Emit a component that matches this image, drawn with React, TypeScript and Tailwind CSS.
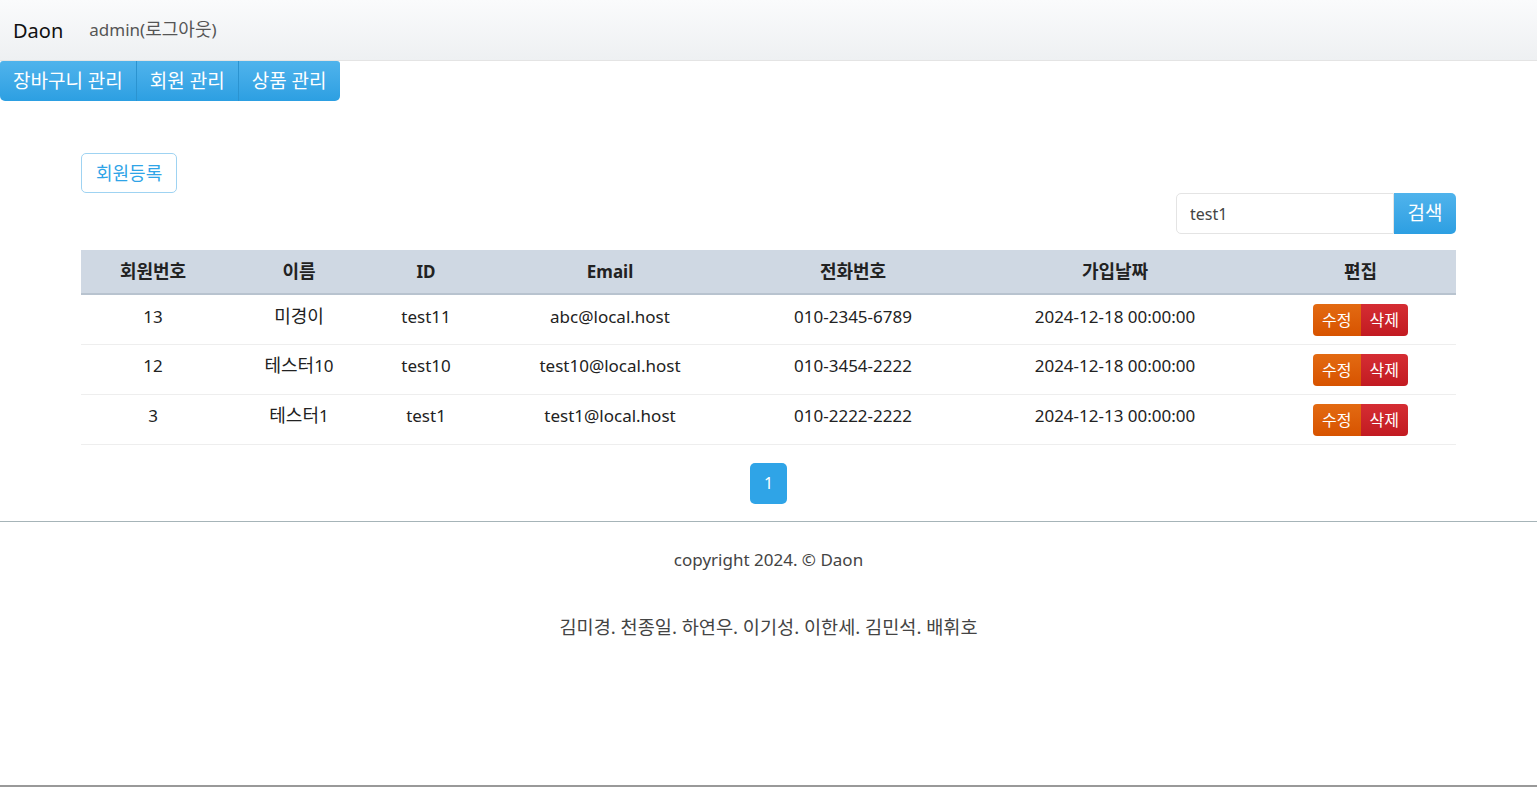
import React from 'react';

interface Member {
  no: number;
  name: string;
  nameSuffix?: string;
  id: string;
  email: string;
  phone: string;
  joined: string;
}

const members: Member[] = [
  { no: 13, name: '미경이', id: 'test11', email: 'abc@local.host', phone: '010-2345-6789', joined: '2024-12-18 00:00:00' },
  { no: 12, name: '테스터', nameSuffix: '10', id: 'test10', email: 'test10@local.host', phone: '010-3454-2222', joined: '2024-12-18 00:00:00' },
  { no: 3, name: '테스터', nameSuffix: '1', id: 'test1', email: 'test1@local.host', phone: '010-2222-2222', joined: '2024-12-13 00:00:00' },
];

const font = { fontFamily: '"Noto Sans", "Noto Sans CJK KR", sans-serif' };

// korean glyphs in the original are a bit wider than Noto CJK
const K = ({ children }: { children: React.ReactNode }) => <span className="text-[1.06em]">{children}</span>;

export default function App() {
  return (
    <div className="min-h-[787px] bg-white text-[#222] border-b-2 border-[#999]" style={font}>
      <nav className="h-[61px] flex items-center px-[13px] bg-gradient-to-b from-[#fafbfc] to-[#eef0f2] border-b border-[#e4e4e4]">
        <span className="text-[20px] text-[#111] mr-[26px] mt-[2px]">Daon</span>
        <span className="text-[17px] text-[#555]">admin(<K>로그아웃</K>)</span>
      </nav>

      <div className="inline-flex rounded-b-[5px] rounded-t-[3px] overflow-hidden text-white text-[19px] h-[40px]">
        <button className="px-[13px] bg-gradient-to-b from-[#4fb3ec] to-[#2c9fe2] border-r border-[#2b93d0]">장바구니 관리</button>
        <button className="px-[13px] bg-gradient-to-b from-[#4fb3ec] to-[#2c9fe2] border-r border-[#2b93d0]">회원 관리</button>
        <button className="px-[13px] bg-gradient-to-b from-[#4fb3ec] to-[#2c9fe2]">상품 관리</button>
      </div>

      <main className="px-[81px] pt-[52px]">
        <button className="h-[40px] px-[14px] border border-[#9fd3f2] rounded-[5px] text-[#2fa4e7] text-[18px]">회원등록</button>

        <div className="flex justify-end">
          <div className="flex h-[41px]">
            <input
              defaultValue="test1"
              className="w-[218px] border border-[#e4e4e4] rounded-l-[5px] px-[13px] text-[16px] text-[#444] outline-none"
            />
            <button className="w-[62px] rounded-r-[5px] bg-gradient-to-b from-[#4fb3ec] to-[#2c9fe2] text-white text-[19px]">검색</button>
          </div>
        </div>

        <table className="w-full mt-[16px] border-collapse text-[17px]">
          <thead>
            <tr className="bg-[#cfd8e3] h-[44px] border-b-2 border-[#b8c3cf] text-[18px]">
              <th className="w-[144px] font-bold">회원번호</th>
              <th className="w-[148px] font-bold">이름</th>
              <th className="w-[106px] font-bold text-[17px]">ID</th>
              <th className="w-[262px] font-bold text-[17px]">Email</th>
              <th className="w-[224px] font-bold">전화번호</th>
              <th className="w-[300px] font-bold">가입날짜</th>
              <th className="font-bold">편집</th>
            </tr>
          </thead>
          <tbody>
            {members.map(m => (
              <tr key={m.no} className="h-[50px] border-b border-[#eeeeee] text-center">
                <td className="pb-[6px]">{m.no}</td>
                <td className="pb-[6px]"><K>{m.name}</K>{m.nameSuffix}</td>
                <td className="pb-[6px]">{m.id}</td>
                <td className="pb-[6px]">{m.email}</td>
                <td className="pb-[6px]">{m.phone}</td>
                <td className="pb-[6px]">{m.joined}</td>
                <td>
                  <div className="inline-flex h-[32px] text-white text-[16px] mt-[2px]">
                    <button className="px-[9px] rounded-l-[4px] bg-gradient-to-b from-[#e36a12] to-[#d75300]">수정</button>
                    <button className="px-[9px] rounded-r-[4px] bg-gradient-to-b from-[#d52d33] to-[#c21a21]">삭제</button>
                  </div>
                </td>
              </tr>
            ))}
          </tbody>
        </table>

        <div className="flex justify-center pt-[18px] pb-[17px]">
          <span className="w-[37px] h-[41px] flex items-center justify-center rounded-[5px] bg-[#2fa4e7] text-white text-[16px]">1</span>
        </div>
      </main>

      <footer className="border-t border-[#a6b4b8] text-center text-[#444]">
        <p className="pt-[25px] text-[17px]">copyright 2024. © Daon</p>
        <p className="pt-[41px] text-[18.6px]">김미경. 천종일. 하연우. 이기성. 이한세. 김민석. 배휘호</p>
      </footer>
    </div>
  );
}
